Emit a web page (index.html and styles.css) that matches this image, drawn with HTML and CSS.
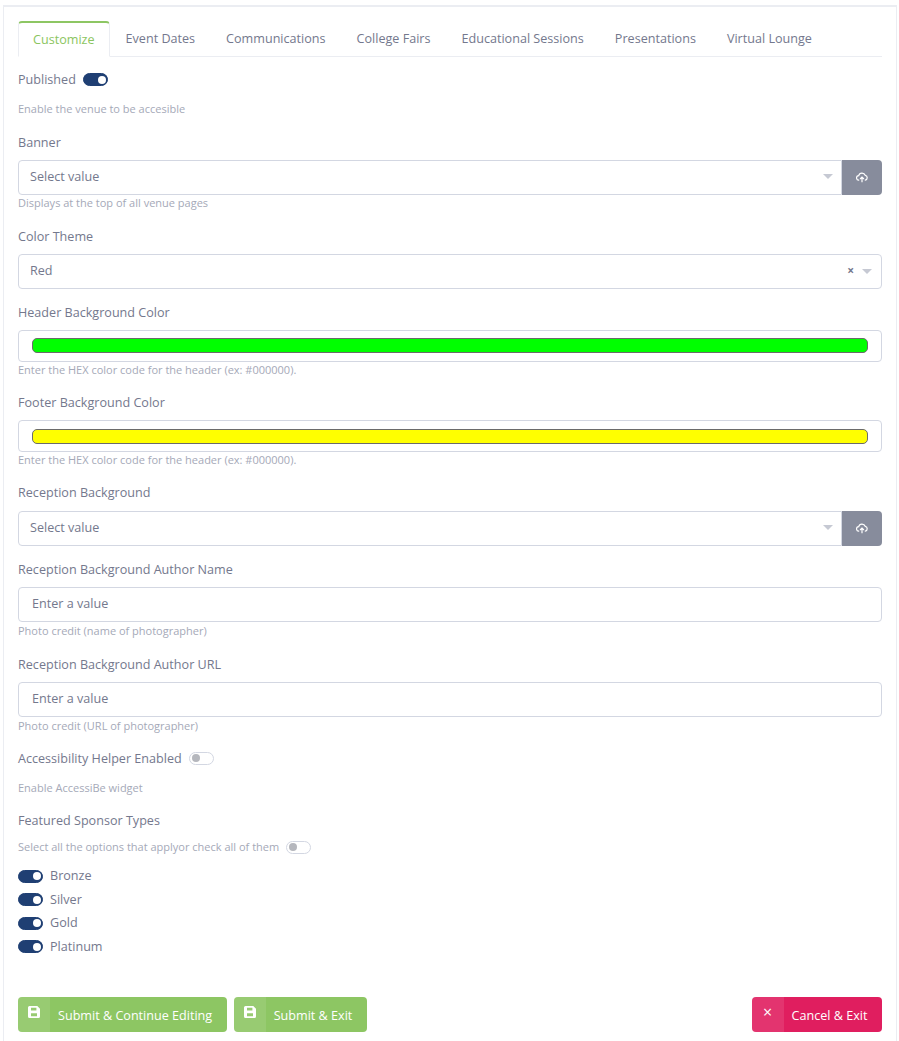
FILE: index.html
```html
<!DOCTYPE html>
<html>
<head>
    <meta charset="UTF-8">
    <title>Customize venue</title>
    <link rel="stylesheet" href="styles.css">
</head>
<body>
<svg class="svg_defs" width="0" height="0">
    <symbol id="cloud" viewBox="0 0 12 12">
        <path d="M3.2 9.2H3a2.3 2.3 0 0 1-.3-4.6 3.4 3.4 0 0 1 6.500-.3 2.500 2.500 0 0 1 0 4.900h-.4" fill="none" stroke="#fff" stroke-width="1.200"/>
        <path d="M6 11.200V6.400M4.100 8 6 6.100 7.900 8" fill="none" stroke="#fff" stroke-width="1.200"/>
    </symbol>
    <symbol id="save" viewBox="0 0 12 12">
        <path d="M1.500 0h7.800L12 2.700v7.800A1.500 1.500 0 0 1 10.500 12h-9A1.500 1.500 0 0 1 0 10.500v-9A1.500 1.500 0 0 1 1.500 0zM3 1.800v2.700h5.400V1.800zM3 7.200v3h6v-3z" fill="#fff" fill-rule="evenodd"/>
    </symbol>
</svg>
<div class="card">
    <ul class="tabs">
        <li class="active">Customize</li>
        <li>Event Dates</li>
        <li>Communications</li>
        <li>College Fairs</li>
        <li>Educational Sessions</li>
        <li>Presentations</li>
        <li>Virtual Lounge</li>
    </ul>

    <div class="group group_switch">
        <div class="switch_line"><label>Published</label><span class="switch on"></span></div>
        <div class="hint">Enable the venue to be accesible</div>
    </div>

    <div class="group">
        <label>Banner</label>
        <div class="upload_row">
            <div class="select"><span>Select value</span><i class="arrow"></i></div>
            <button class="upload" type="button"><svg width="12" height="12"><use href="#cloud"/></svg></button>
        </div>
        <div class="hint">Displays at the top of all venue pages</div>
    </div>

    <div class="group">
        <label>Color Theme</label>
        <div class="select"><span>Red</span><b class="clear">×</b><i class="arrow"></i></div>
    </div>

    <div class="group">
        <label>Header Background Color</label>
        <div class="color_box"><div class="swatch swatch_green"></div></div>
        <div class="hint">Enter the HEX color code for the header (ex: #000000).</div>
    </div>

    <div class="group">
        <label>Footer Background Color</label>
        <div class="color_box"><div class="swatch swatch_yellow"></div></div>
        <div class="hint">Enter the HEX color code for the header (ex: #000000).</div>
    </div>

    <div class="group">
        <label>Reception Background</label>
        <div class="upload_row">
            <div class="select"><span>Select value</span><i class="arrow"></i></div>
            <button class="upload" type="button"><svg width="12" height="12"><use href="#cloud"/></svg></button>
        </div>
    </div>

    <div class="group">
        <label>Reception Background Author Name</label>
        <input class="input" type="text" placeholder="Enter a value">
        <div class="hint">Photo credit (name of photographer)</div>
    </div>

    <div class="group">
        <label>Reception Background Author URL</label>
        <input class="input" type="text" placeholder="Enter a value">
        <div class="hint">Photo credit (URL of photographer)</div>
    </div>

    <div class="group group_switch group_access">
        <div class="switch_line"><label>Accessibility Helper Enabled</label><span class="switch"></span></div>
        <div class="hint">Enable AccessiBe widget</div>
    </div>

    <div class="group">
        <label>Featured Sponsor Types</label>
        <div class="check_all"><span class="hint">Select all the options that applyor check all of them</span><span class="switch"></span></div>
        <div class="options">
            <div class="option"><span class="switch on"></span>Bronze</div>
            <div class="option"><span class="switch on"></span>Silver</div>
            <div class="option"><span class="switch on"></span>Gold</div>
            <div class="option"><span class="switch on"></span>Platinum</div>
        </div>
    </div>

    <div class="actions">
        <button class="btn btn_green" type="button"><span class="btn_icon"><svg width="12" height="12"><use href="#save"/></svg></span>Submit &amp; Continue Editing</button>
        <button class="btn btn_green" type="button"><span class="btn_icon"><svg width="12" height="12"><use href="#save"/></svg></span>Submit &amp; Exit</button>
        <button class="btn btn_red" type="button"><span class="btn_icon">×</span>Cancel &amp; Exit</button>
    </div>
</div>
</body>
</html>
```

FILE: styles.css
```css
body{
    margin:0;
    height:1041px;
    overflow:hidden;
    background:#fff;
    font-family:"Open Sans","Noto Sans",sans-serif;
    font-size:12.600px;
    line-height:19.500px;
    color:#74788d;
}
.svg_defs{
    display:block;
}
.card{
    margin:5px 2px 0 3px;
    padding:14px 14px 0;
    border:1px solid #ebedf2;
    border-bottom:0;
    border-top-width:2px;
    box-sizing:border-box;
    height:1036px;
}
.tabs{
    display:flex;
    list-style:none;
    margin:0 0 13px;
    padding:0;
    height:35px;
    border-bottom:1px solid #ebedf2;
}
.tabs li{
    padding:8px 15.500px 0;
    height:35px;
    box-sizing:border-box;
}
.tabs .active{
    color:#8bc560;
    border:1px solid #ebedf2;
    border-top:2px solid #8dc663;
    border-bottom:1px solid #fff;
    border-radius:4px 4px 0 0;
    padding:7px 14.500px 0 14px;
    height:36px;
}
label{
    display:block;
}
.group > label{
    padding-top:.4px;
    margin-bottom:7.600px;
}
.group{
    margin-bottom:13.300px;
}
.group_switch{
    margin-bottom:13.700px;
}
.group_access{
    margin-top:-1px;
    margin-bottom:12.700px;
}
.group_switch .hint{
    padding-top:11px;
}
.group_access .hint{
    padding-top:12px;
}
.switch_line{
    display:flex;
    align-items:center;
    gap:7px;
}
.hint{
    font-size:11px;
    line-height:16px;
    padding-bottom:2px;
    color:#a5a9b8;
}
.input + .hint{
    padding-top:1px;
}
.select, .input{
    display:block;
    width:100%;
    height:35.400px;
    box-sizing:border-box;
    border:1px solid #d3d7e2;
    border-radius:4px;
    background:#fff;
    font:inherit;
    color:#74788d;
}
.select{
    display:flex;
    align-items:center;
    padding:0 9px 1px 11px;
}
.select span{
    flex:1;
}
.input{
    padding:0 13px 2px;
    outline:none;
}
.input::placeholder{
    color:#74788d;
    opacity:1;
}
.arrow{
    width:0;
    height:0;
    border-left:5px solid transparent;
    border-right:5px solid transparent;
    border-top:5px solid #c6c9d3;
}
.clear{
    margin-right:8px;
    font-size:12px;
    color:#74788d;
}
.upload_row{
    display:flex;
}
.upload_row .select{
    flex:1;
    border-radius:4px 0 0 4px;
    padding-right:8px;
}
.upload{
    width:40px;
    height:35.400px;
    padding:0;
    border:0;
    border-radius:0 4px 4px 0;
    background:#878c9c;
    display:flex;
    align-items:center;
    justify-content:center;
}
.color_box{
    height:31.500px;
    box-sizing:border-box;
    border:1px solid #d3d7e2;
    border-radius:4px;
    padding:7.300px 13px;
}
.swatch{
    height:15px;
    box-sizing:border-box;
    border:1px solid #6b6b6b;
    border-radius:5px;
}
.swatch_green{
    background:#00ff00;
}
.swatch_yellow{
    background:#ffff00;
}
.switch{
    display:inline-block;
    position:relative;
    width:25px;
    height:13px;
    box-sizing:border-box;
    border:1px solid #d3d7e2;
    border-radius:7px;
    background:#fff;
    flex:none;
}
.switch:after{
    content:"";
    position:absolute;
    left:2px;
    top:1.500px;
    width:8px;
    height:8px;
    border-radius:50%;
    background:#b5b7bd;
}
.switch.on{
    background:#1f3f73;
    border-color:#1f3f73;
}
.switch.on:after{
    left:14px;
    background:#fff;
}
.check_all{
    display:flex;
    align-items:center;
    gap:7px;
    padding-top:1px;
    margin-bottom:11px;
}
.check_all .hint{
    padding:0;
}
.options{
    display:flex;
    flex-direction:column;
    gap:4px;
}
.option{
    display:flex;
    align-items:center;
    gap:7px;
}
.actions{
    display:flex;
    gap:7px;
    margin-top:41px;
}
.btn{
    display:flex;
    align-items:center;
    height:35px;
    padding:2px 14.500px 0 0;
    border:0;
    border-radius:4px;
    font:inherit;
    color:#fff;
    overflow:hidden;
}
.btn_green{
    background:#8dc663;
}
.btn_red{
    background:#e01e5f;
    margin-left:auto;
}
.btn_icon{
    align-self:flex-start;
    width:32px;
    height:35px;
    margin-top:-2px;
    margin-right:8px;
    padding-bottom:5px;
    box-sizing:border-box;
    background:rgba(255,255,255,.1);
    display:flex;
    align-items:center;
    justify-content:center;
    font-size:16px;
}
```
